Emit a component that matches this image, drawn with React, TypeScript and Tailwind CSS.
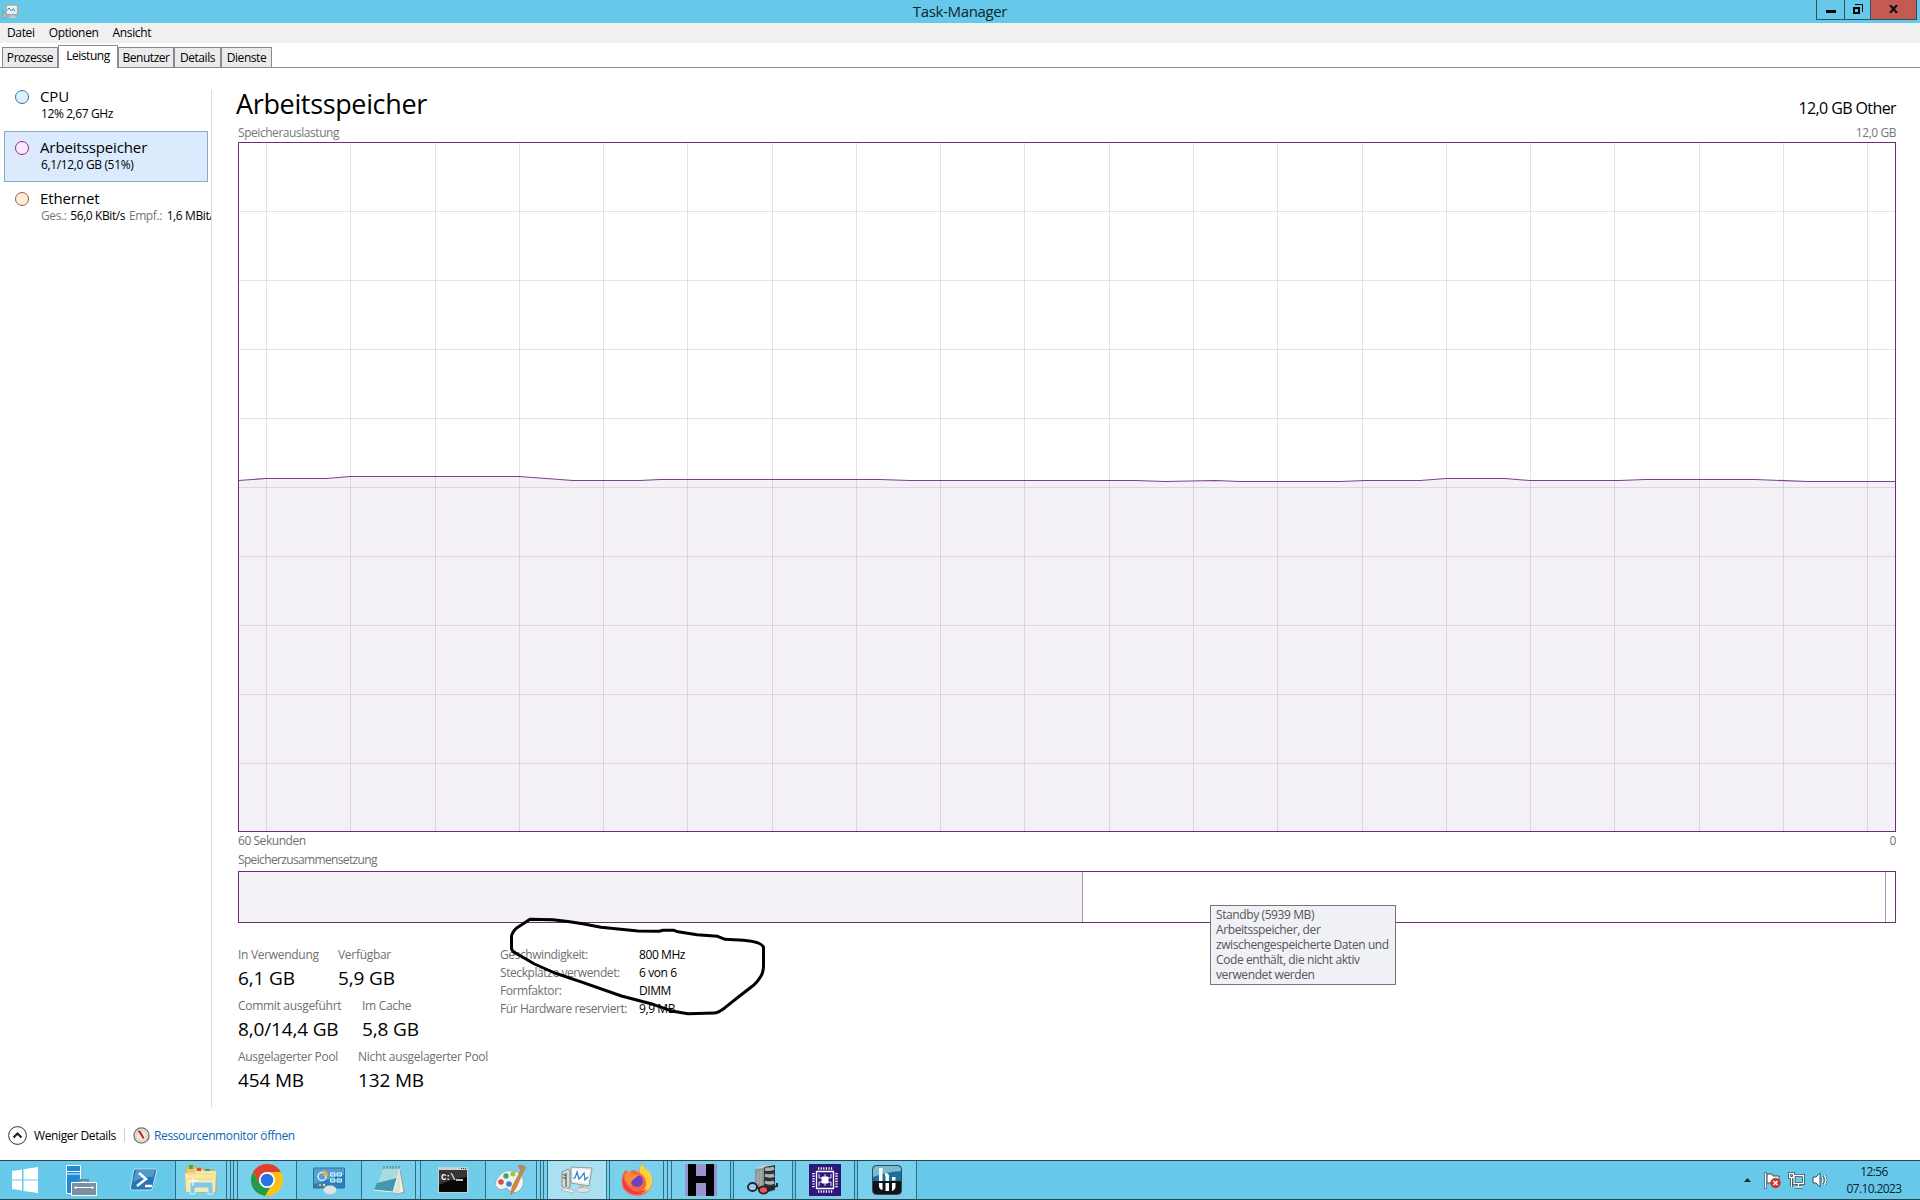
import type { ReactNode } from "react";

const tabs = [
    { label: "Prozesse", width: "w-[56px]" },
    { label: "Leistung", width: "w-[60px]", active: true },
    { label: "Benutzer", width: "w-[56px]" },
    { label: "Details", width: "w-[47px]" },
    { label: "Dienste", width: "w-[51px]" },
];

// usage curve, in pixels inside the 1658 x 690 plot
const usage =
    "0,338.5 28,336.5 88,336.5 112,334.5 281,334.5 335,338.5 402,338.5 422,337.5 642,337.5 672,338.5 897,338.5 927,339.5 977,338.5 1002,339.5 1102,339.5 1127,338.5 1182,338.5 1208,336.5 1267,336.5 1292,338.5 1382,338.5 1407,337.5 1517,337.5 1570,339.5 1658,339.5";

const TitleBar = () => (
    <header className="relative flex h-[23px] shrink-0 bg-[#66c9ea]">
        <svg width="18" height="16" viewBox="0 0 18 16" className="mt-1 ml-0.5">
            <path d="M1 6v8M1 9h3v5H1" fill="#c9ccc9" stroke="#8d9394" />
            <path d="M4 1h11.500v9.500H4z" fill="#f2f2ee" stroke="#a3a9a5" strokeWidth="1.500" />
            <path d="M5 2.500h9.500v7H5z" fill="#e9f5fc" />
            <path d="M5 6.500l2-2.500 2.500 3 2-2.500 1.500 3" fill="none" stroke="#2f86c4" />
            <path d="M8 11.500h5l2 2.500H7z" fill="#c5c9c8" />
        </svg>
        <h1 className="absolute inset-x-0 text-center text-[15px] leading-[23px] tracking-[-0.35px] text-[#10232b]">Task-Manager</h1>
        <div className="ml-auto mr-[3px] flex h-5 border border-t-0 border-[#2d5261]">
            <div className="flex w-[28px] justify-center border-r border-[#2d5261] pt-[10px]">
                <span className="h-[3px] w-[10px] bg-black" />
            </div>
            <div className="flex w-[26px] justify-center border-r border-[#2d5261] pt-1">
                <svg width="11" height="11" viewBox="0 0 11 11" fill="none" stroke="#000">
                    <path d="M2 4h5v5H2z" strokeWidth="2" />
                    <path d="M3 .5h7.500V8" />
                </svg>
            </div>
            <div className="flex w-[45px] justify-center bg-[#c45b52] pt-[5px]">
                <svg width="9" height="8" viewBox="0 0 9 8" stroke="#111" strokeWidth="2.200">
                    <path d="M1 0l7 8M8 0L1 8" />
                </svg>
            </div>
        </div>
    </header>
);

const Resource = ({ name, ring, active, children }: { name: string; ring: string; active?: boolean; children: ReactNode }) => (
    <div className={`ml-1 flex h-[51px] border ${active ? "w-[204px] border-[#86aecb] bg-[#dbeafd]" : "w-[208px] border-transparent"}`}>
        <span className={`mt-[9px] ml-[10px] size-[14px] shrink-0 rounded-full border ${ring}`} />
        <div className="ml-[11px] pt-[5px] whitespace-nowrap">
            <div className="text-[15px] leading-[21px] tracking-[-0.12px]">{name}</div>
            <div className="ml-px text-[12px] leading-[14px] tracking-[-0.4px]">{children}</div>
        </div>
    </div>
);

const Stat = ({ label, value, width }: { label: string; value: string; width?: string }) => (
    <div className={`h-[51px] whitespace-nowrap ${width ?? ""}`}>
        <div className="text-[12px] leading-[18px] tracking-[-0.3px] text-[#707070]">{label}</div>
        <div className="text-[19px] leading-[29px] tracking-[-0.15px]">{value}</div>
    </div>
);

const Chart = () => (
    <svg width="1658" height="690" viewBox="0 0 1658 690" className="block shrink-0">
        <polygon points={`0,690 ${usage} 1658,690`} fill="#f3f1f5" />
        <g stroke="#8a5f96" strokeOpacity=".2" shapeRendering="crispEdges">
            {Array.from({ length: 20 }, (_, i) => (
                <line key={i} x1={28.5 + i * 84.27} x2={28.5 + i * 84.27} y1="0" y2="690" />
            ))}
            {Array.from({ length: 9 }, (_, i) => (
                <line key={i} x1="0" x2="1658" y1={69.5 + i * 69} y2={69.5 + i * 69} />
            ))}
        </g>
        <polyline points={usage} fill="none" stroke="#7b4191" strokeWidth="1.100" />
        <rect x=".5" y=".5" width="1657" height="689" fill="none" stroke="#702c7c" />
    </svg>
);

const Task = ({ width, className = "", children }: { width: string; className?: string; children: ReactNode }) => (
    <div className={`flex h-full shrink-0 items-center justify-center ${width} ${className}`}>{children}</div>
);

const open = "border-x border-[#2f6f86] bg-[#78d0ec]";

const Taskbar = () => (
    <footer className="flex h-10 shrink-0 border-y border-[#30444c] bg-[#66c9ea]">
        <Task width="w-[50px]">
            <svg width="28" height="26" viewBox="0 0 28 26" fill="#fff">
                <path d="M1 4l10-1.500v10H1zM12.500 2.300L27 0v12.500H12.500zM1 13.500h10v10L1 22zM12.500 13.500H27V26l-14.500-2z" />
            </svg>
        </Task>
        <Task width="w-[62px]">
            <svg width="33" height="33" viewBox="0 0 33 33">
                <path d="M1.500 1.500h14v28h-14z" fill="#1c8bd4" stroke="#fff" />
                <path d="M1.500 7.500h14M1.500 10h14" stroke="#fff" />
                <path d="M15 19v-3h8v3" fill="none" stroke="#68899b" strokeWidth="2" />
                <path d="M6.500 18.500h25v13h-25z" fill="#78909f" stroke="#fff" />
                <path d="M9 23.500h20M11 22v3M27 22v3" stroke="#fff" />
            </svg>
        </Task>
        <Task width="w-[63px]">
            <svg width="30" height="26" viewBox="0 0 30 26">
                <path d="M6 2h20q2 0 1.500 2l-4 17q-.5 2-2.500 2H3q-2 0-1.500-2l3-17Q5 2 6 2z" fill="#2575b4" stroke="#b9e3f5" />
                <path d="M7 3h19l-2 7Q15 9 4 15z" fill="#62a9d3" opacity=".7" />
                <path d="M10 6l7 6-9 7M16 19h7" fill="none" stroke="#fff" strokeWidth="2.500" />
            </svg>
        </Task>
        <Task width="w-[52px]" className={open}>
            <svg width="34" height="32" viewBox="0 0 34 32">
                <path d="M2 5l2-3h6l2 2h7l2 2h9l2 3v19H2z" fill="#e8c966" stroke="#c7a94e" />
                <path d="M5 1h4v4H5z" fill="#49a84f" />
                <path d="M13 4h4v3h-4z" fill="#cd514a" />
                <path d="M21 5h5v3h-5z" fill="#3c92bd" />
                <path d="M1 9h9l2-2h20l-1 21H2z" fill="#f8e9a4" />
                <path d="M2 10h28M2 15h28" stroke="#f1d983" />
                <path d="M6 30V20q0-2 2-2h19q2 0 2 2v10h-5v-6H11v6z" fill="#86c6e3" stroke="#d7f2fb" />
                <path d="M9 13v9M5 17h8" stroke="#fff" />
            </svg>
        </Task>
        <div className="flex w-[10px] shrink-0 justify-evenly bg-[#78d0ec]">
            <span className="w-px bg-[#2f6f86]" />
            <span className="w-px bg-[#2f6f86]" />
        </div>
        <Task width="w-[60px]" className={open}>
            <svg width="32" height="32" viewBox="0 0 32 32">
                <circle cx="16" cy="16" r="16" fill="#fbc116" />
                <path d="M2.100 8A16 16 0 0 0 14 31.900L21 20 16 16 9 20z" fill="#1e9b4b" />
                <path d="M2.100 8A16 16 0 0 1 29.900 8H16L9 20z" fill="#df4032" />
                <circle cx="16" cy="16" r="8" fill="#fff" />
                <circle cx="16" cy="16" r="6.300" fill="#2872e6" />
            </svg>
        </Task>
        <Task width="w-[64px]" className="bg-[#6fcdeb]">
            <svg width="32" height="30" viewBox="0 0 32 30">
                <path d="M.5 3h31v20H.5z" fill="#2f7dba" stroke="#2473a5" />
                <path d="M1 3.500h30v6L1 19z" fill="#559fd0" />
                <circle cx="9" cy="11.500" r="4" fill="none" stroke="#d9eff8" strokeWidth="1.500" />
                <path d="M10 5v6h5a6 6 0 0 0-5-6" fill="#edac40" />
                <path d="M17.500 8h4.500v3h-4.500zM24 8h4.500v3H24zM17.500 14h4.500v3h-4.500zM24 14h4.500v3H24z" fill="#4fb9e4" stroke="#e0f4fc" />
                <circle cx="7" cy="20" r="1.200" fill="#f1b042" />
                <circle cx="11" cy="20" r="1.200" fill="#d5e9a7" />
                <ellipse cx="17" cy="25" rx="6.500" ry="4.500" fill="#dfe4e7" stroke="#b4bdc2" strokeWidth=".6" />
            </svg>
        </Task>
        <Task width="w-[55px]" className={open}>
            <svg width="32" height="30" viewBox="0 0 32 30">
                <path d="M27 5l4 22-6 2-8-2z" fill="#f1f0d9" stroke="#7e8d88" strokeWidth=".7" />
                <path d="M10 3h17l-7 24-19-2z" fill="#4597ad" />
                <path d="M10 3h17l-3 10L4 18z" fill="#a9dbe3" />
                <path d="M1 25l19 2 7-24" fill="none" stroke="#e7f6f8" />
                <path d="M27 5l-6 22 6 1z" fill="#dfe2dc" />
                <path d="M11 1v3M14 1v3M17 1v3M20 1v3M23 1v3M26 1v3" stroke="#616e70" />
            </svg>
        </Task>
        <div className="w-1 shrink-0 bg-[#78d0ec]" />
        <Task width="w-[65px]" className="border-l border-[#2f6f86] bg-[#6fcdeb]">
            <svg width="30" height="26" viewBox="0 0 30 26">
                <path d="M0 0h30v26H0z" fill="#cdd0cd" />
                <path d="M1 3h28v22H1z" fill="#070707" />
                <path d="M1 3h28v7Q14 12 1 18z" fill="#353535" />
                <path d="M23 1.500h1M25 1.500h1M27 1.500h1" stroke="#333" />
                <text x="3" y="12.500" fill="#fff" className="font-['Liberation_Mono'] text-[9px] font-bold tracking-[-0.8px]">C:\</text>
                <path d="M18 13h7" stroke="#fff" strokeWidth="1.500" />
            </svg>
        </Task>
        <Task width="w-[52px]" className={open}>
            <svg width="32" height="32" viewBox="0 0 32 32">
                <path d="M19 7Q9 5 4 12q-6 7-2 12 4 3 7 1 3-2 5 1 4 5 10 1 6-5 4-13-2-6-9-7z" fill="#edf2f3" stroke="#8badc0" />
                <circle cx="6" cy="18" r="2.800" fill="#dc4850" />
                <circle cx="11" cy="12" r="2.700" fill="#48a46d" />
                <circle cx="18" cy="10" r="2.500" fill="#97c63e" />
                <circle cx="14" cy="20" r="2.800" fill="#3c83cb" />
                <path d="M26 6h3l-8 18-5 7 1-8z" fill="#c98a42" stroke="#b0702f" strokeWidth=".6" />
                <path d="M23 1q5-1 8 2 1 2-3 4-4 0-5-6z" fill="#b58b56" />
            </svg>
        </Task>
        <div className="flex w-[10px] shrink-0 justify-evenly bg-[#78d0ec]">
            <span className="w-px bg-[#2f6f86]" />
            <span className="w-px bg-[#2f6f86]" />
        </div>
        <Task width="w-[60px]" className="border-x border-[#2f6f86] bg-[#a9e0f2]">
            <svg width="32" height="30" viewBox="0 0 32 30">
                <path d="M1 7l6-3 2 2v16l-4 2-4-3z" fill="#d9dcd6" stroke="#808c8b" />
                <path d="M2 9.500l3 1M2 12.500l3 1M5 8v14" stroke="#3d4542" />
                <path d="M10 2l21 1-3 18-18-3z" fill="#e9ebe8" stroke="#929c9c" />
                <path d="M11.500 4l17.500 1-2.500 13.500-15-2.500z" fill="#f8fcfe" />
                <path d="M12 13l2 0 2-6 2 7 2-2 3-4 1 7 3-3" fill="none" stroke="#2f7fbf" strokeWidth="1.200" />
                <path d="M18 20l5 1v3h-5z" fill="#b4babb" />
                <ellipse cx="22" cy="25" rx="7" ry="2.500" fill="#dde1e1" stroke="#a0a8a8" strokeWidth=".6" />
                <path d="M3 23l10 2-1 3-12-3z" fill="#eceeeb" stroke="#8e9999" strokeWidth=".5" />
            </svg>
        </Task>
        <div className="w-[2px] shrink-0 bg-[#78d0ec]" />
        <Task width="w-[55px]" className={open}>
            <svg width="32" height="32" viewBox="0 0 32 32">
                <path d="M5 6l3 3Q12 3 18 9q-1-6 3-9 1 5 5 8 10 10 2 18-6 8-17 5Q-1 27 1 15 1 9 5 6z" fill="#f8663c" />
                <path d="M21 0q-4 4-2 9 7 4 6 13-3 7-10 7 12 2 16-9 1-8-3-13-5-2-7-7z" fill="#ffcf3c" />
                <path d="M2 12q-2 15 11 18 9 1 13-5-7 4-14 2Q4 22 2 12z" fill="#f03455" />
                <circle cx="16" cy="17" r="6" fill="#6a42c9" />
                <path d="M4 10l5-2 4 3h5l-5 4q-5 3-2 8-9-5-7-13z" fill="#fa8c35" />
            </svg>
        </Task>
        <div className="flex w-[7px] shrink-0 justify-center bg-[#78d0ec]">
            <span className="w-px bg-[#2f6f86]" />
        </div>
        <Task width="w-[60px]" className={open}>
            <svg width="32" height="32" viewBox="0 0 32 32">
                <path d="M0 0h32v32H0z" fill="#9793cc" />
                <path d="M3 0h8v12h10V0h8v32h-8V19H11v13H3z" fill="#020204" />
            </svg>
        </Task>
        <div className="w-[2px] shrink-0 bg-[#66c9ea]" />
        <Task width="w-[60px]" className={open}>
            <svg width="32" height="32" viewBox="0 0 32 32">
                <path d="M8 5l9-3v25l-9-5z" fill="#8f9596" />
                <path d="M8 5l8-4 12 0-11 3z" fill="#c9cdce" />
                <path d="M17 3l11-2v25l-11 3z" fill="#2c3334" />
                <path d="M18 5q5 1 9-1M18 11q5 2 9 0M18 18q5 2 9 0" fill="none" stroke="#aab4b5" strokeWidth="3.500" />
                <path d="M11 7v13M14 6v16" stroke="#b4bbbc" />
                <ellipse cx="5.500" cy="23" rx="4.500" ry="4" fill="#a5c8e8" stroke="#1b2230" strokeWidth="1.800" />
                <ellipse cx="16.500" cy="26" rx="4.500" ry="3.700" fill="#e85550" stroke="#29212b" strokeWidth="1.800" />
                <path d="M10 23l3 2M21 25l9-3v-3" fill="none" stroke="#1d1f26" strokeWidth="1.800" />
            </svg>
        </Task>
        <div className="w-[2px] shrink-0 bg-[#66c9ea]" />
        <Task width="w-[60px]" className={open}>
            <svg width="32" height="32" viewBox="0 0 32 32" fill="none" stroke="#fff">
                <path d="M0 0h32v32H0z" fill="#31167a" stroke="none" />
                <path d="M7.500 7.500h17v17h-17z" strokeWidth="1.300" />
                <path d="M9 4.500h15M9 27.500h15M4.500 9v15M27.500 9v15" strokeWidth="2.500" strokeDasharray="1.200 1.400" />
                <path d="M13 13h6v6h-6z" fill="#fff" />
                <path d="M13 14h-3v-4M16 13v-3M19 14h3v-4M13 18h-3v4M16 19v3M19 18h3v4" strokeWidth=".9" />
            </svg>
        </Task>
        <div className="w-[2px] shrink-0 bg-[#66c9ea]" />
        <Task width="w-[60px]" className={open}>
            <svg width="30" height="30" viewBox="0 0 30 30">
                <rect x=".5" y=".5" width="29" height="29" rx="4" fill="#101416" stroke="#334a54" />
                <path d="M1 16V5q0-4 4-4h20q4 0 4 4v11z" fill="#1b6f9b" />
                <path d="M1 9V5q0-4 4-4h20q4 0 4 4v1Q14 7 1 12z" fill="#7db9d3" />
                <path d="M7 3h3.500v13H7zM13 8q4 0 4 3v5h-3.500v-5H13zM20 12h3.500v3.500H20z" fill="#fff" />
                <path d="M7 18h3.500v7Q7 24 7 21zM13.500 18H17v8h-3.500zM20 18h3.500v3q0 4-3.500 5z" fill="#fff" />
            </svg>
        </Task>
        <div className="ml-auto flex items-center pr-[18px]">
            <svg width="7" height="4" viewBox="0 0 7 4" className="mr-[13px]">
                <path d="M0 4l3.500-4L7 4z" fill="#142a32" />
            </svg>
            <svg width="17" height="17" viewBox="0 0 17 17" className="mr-[7px]">
                <path d="M3 2h5l1 2h6v7H3z" fill="#fff" stroke="#35515c" />
                <path d="M1.500 .5v16" stroke="#35515c" strokeWidth="3" />
                <path d="M1.500 1v15" stroke="#fff" strokeWidth="1.500" />
                <circle cx="11.500" cy="11" r="4.800" fill="#d9322e" stroke="#a3252a" strokeWidth=".6" />
                <path d="M9.500 9l4 4M13.500 9l-4 4" stroke="#fff" strokeWidth="1.500" />
            </svg>
            <svg width="17" height="17" viewBox="0 0 17 17" className="mr-[7px]" fill="none">
                <path d="M6 3.500h9.500v8H6zM10.500 12v3M7 15h8M1.500 1.500h4v4h-4zM3.500 6v9" stroke="#27424d" strokeWidth="2.800" />
                <path d="M6 3.500h9.500v8H6zM10.500 12v3M7 15h8M1.500 1.500h4v4h-4zM3.500 6v9" stroke="#fff" strokeWidth="1.300" />
            </svg>
            <svg width="16" height="16" viewBox="0 0 16 16" className="mr-[18px]">
                <path d="M1 5h3l4-4v14l-4-4H1z" fill="#fff" stroke="#35515c" />
                <path d="M10 5q2 3 0 6M12 3q4 5 0 10" fill="none" stroke="#35515c" strokeWidth="2.400" />
                <path d="M10 5q2 3 0 6M12 3q4 5 0 10" fill="none" stroke="#fff" strokeWidth="1.300" />
            </svg>
            <div className="w-[56px] text-center text-[12px] leading-[17px] tracking-[-0.6px] whitespace-nowrap text-[#10232b]">
                <div>12:56</div>
                <div>07.10.2023</div>
            </div>
        </div>
    </footer>
);

export default function App() {
    return (
        <div className="relative flex h-[1200px] w-[1920px] flex-col overflow-hidden bg-white font-['Open_Sans','Noto_Sans',sans-serif] text-black">
            <TitleBar />

            <nav className="flex h-5 shrink-0 gap-[14px] bg-[#f0f0f0] pl-[7px] text-[12px] leading-5 tracking-[-0.35px]">
                <span>Datei</span>
                <span>Optionen</span>
                <span>Ansicht</span>
            </nav>

            <div className="flex h-[25px] shrink-0 items-end border-b border-[#888b8e] pl-[2px] text-[12px] tracking-[-0.45px]">
                {tabs.map((tab) => (
                    <div
                        key={tab.label}
                        className={`${tab.width} border border-b-0 border-[#888b8e] text-center ${
                            tab.active ? "relative -mb-px h-[23px] bg-white leading-[20px]" : "h-5 bg-[#ebebeb] leading-5"
                        }`}
                    >
                        {tab.label}
                    </div>
                ))}
            </div>

            <div className="flex h-[1042px] shrink-0">
                <aside className="w-[211px] overflow-hidden pt-[12px]">
                    <Resource name="CPU" ring="border-[#307c9f] bg-[#ddf0fb]">12%&nbsp;2,67 GHz</Resource>
                    <Resource name="Arbeitsspeicher" ring="border-[#8f2ba0] bg-[#fae8fb]" active>
                        <span className="tracking-[-0.35px]">6,1/12,0 GB (51%)</span>
                    </Resource>
                    <Resource name="Ethernet" ring="border-[#a35f25] bg-[#fdebdc]">
                        <span className="text-[#777]">Ges.:</span>&nbsp;<span className="ml-px">56,0 KBit/s</span>{" "}
                        <span className="ml-px text-[#777]">Empf.:</span>&nbsp;<span className="ml-[2px]">1,6 MBit/s</span>
                    </Resource>
                </aside>
                <div className="mt-[22px] h-[1018px] w-px bg-[#dcdcdc]" />

                <main className="ml-[26px] flex w-[1658px] flex-col pt-[18px]">
                    <div className="flex h-[38px] items-end justify-between">
                        <h2 className="-ml-[2px] h-[38px] text-[27px] leading-[36px] tracking-[-0.35px]">Arbeitsspeicher</h2>
                        <span className="text-[16px] leading-[31px] tracking-[-0.6px]">12,0 GB Other</span>
                    </div>
                    <div className="flex h-[18px] justify-between text-[12px] leading-[18px] tracking-[-0.45px] text-[#777]">
                        <span>Speicherauslastung</span>
                        <span>12,0 GB</span>
                    </div>
                    <Chart />
                    <div className="flex h-[19px] shrink-0 justify-between text-[12px] leading-[18px] tracking-[-0.45px] text-[#707070]">
                        <span>60 Sekunden</span>
                        <span>0</span>
                    </div>
                    <div className="h-5 text-[12px] leading-[18px] tracking-[-0.65px] text-[#707070]">Speicherzusammensetzung</div>
                    <div className="flex h-[52px] shrink-0 border border-[#702c7c]">
                        <div className="w-[843px] bg-[#f3f1f5]" />
                        <div className="w-[804px] border-x border-[#b993c0]" />
                    </div>

                    <div className="mt-[23px] flex">
                        <div className="w-[262px]">
                            <div className="flex">
                                <Stat label="In Verwendung" value="6,1 GB" width="w-[100px]" />
                                <Stat label="Verfügbar" value="5,9 GB" />
                            </div>
                            <div className="flex">
                                <Stat label="Commit ausgeführt" value="8,0/14,4 GB" width="w-[124px]" />
                                <Stat label="Im Cache" value="5,8 GB" />
                            </div>
                            <div className="flex">
                                <Stat label="Ausgelagerter Pool" value="454 MB" width="w-[120px]" />
                                <Stat label="Nicht ausgelagerter Pool" value="132 MB" />
                            </div>
                        </div>
                        <dl className="grid h-[72px] grid-cols-[139px_100px] text-[12px] leading-[18px] tracking-[-0.42px] whitespace-nowrap">
                            <dt className="text-[#707070]">Geschwindigkeit:</dt>
                            <dd>800 MHz</dd>
                            <dt className="text-[#707070]">Steckplätze verwendet:</dt>
                            <dd>6 von 6</dd>
                            <dt className="text-[#707070]">Formfaktor:</dt>
                            <dd>DIMM</dd>
                            <dt className="text-[#707070]">Für Hardware reserviert:</dt>
                            <dd>9,9 MB</dd>
                        </dl>
                    </div>
                </main>
            </div>

            <div className="flex h-[50px] shrink-0 items-center pl-2 text-[12px] tracking-[-0.38px]">
                <svg width="19" height="19" viewBox="0 0 19 19" fill="none">
                    <circle cx="9.500" cy="9.500" r="8.900" stroke="#333" />
                    <path d="M5.500 11.500l4-4 4 4" stroke="#222" strokeWidth="2.200" />
                </svg>
                <span className="ml-[7px] w-[82px] pt-px whitespace-nowrap">Weniger Details</span>
                <span className="mx-2 h-[14px] w-px bg-[#ccc]" />
                <svg width="17" height="17" viewBox="0 0 17 17">
                    <circle cx="8.500" cy="8.500" r="7.600" fill="#eee8e3" stroke="#77716e" strokeWidth="1.300" />
                    <circle cx="8.500" cy="8.500" r="5.500" fill="none" stroke="#b9aca6" strokeDasharray="1.500 1" />
                    <path d="M4.500 3.500l3 .5 4 7-1.500 1z" fill="#c32327" />
                </svg>
                <span className="ml-[4px] pt-px text-[#0b66b5]">Ressourcenmonitor öffnen</span>
            </div>

            <Taskbar />

            {/* tooltip of the standby segment */}
            <div className="absolute top-[905px] left-[1210px] h-[80px] w-[186px] border border-[#757579] bg-[#f0f1f7] pt-px pl-[5px] text-[12px] leading-[15px] tracking-[-0.4px] whitespace-nowrap text-[#555]">
                Standby (5939 MB)
                <br />
                Arbeitsspeicher, der
                <br />
                zwischengespeicherte Daten und
                <br />
                Code enthält, die nicht aktiv
                <br />
                verwendet werden
            </div>

            {/* pen stroke over the memory details */}
            <svg width="580" height="290" viewBox="0 0 580 290" className="pointer-events-none absolute top-[820px] left-[220px]">
                <path
                    d="M310 99.300L333 99.700Q348 101 362.600 103.700L381 107.300 418 111l21 .3 4-1h11l4 1.500 19 3 20.600 1.500 7.400 3 18.500 1Q543.500 122 543.500 128.300V146.700Q543 153 541 156 537 163 531.600 166.700L518 177.300 505 187.700Q498 193 494 193L468 193.700 453 191.300 433 184.300 401.400 176 362.600 162.300 334.800 153 314.500 144 296 133.300Q291.500 131 291.500 128.300V116.700Q292 112 297 107.700z"
                    fill="none"
                    stroke="#000"
                    strokeWidth="3"
                    strokeLinejoin="round"
                />
            </svg>
        </div>
    );
}
